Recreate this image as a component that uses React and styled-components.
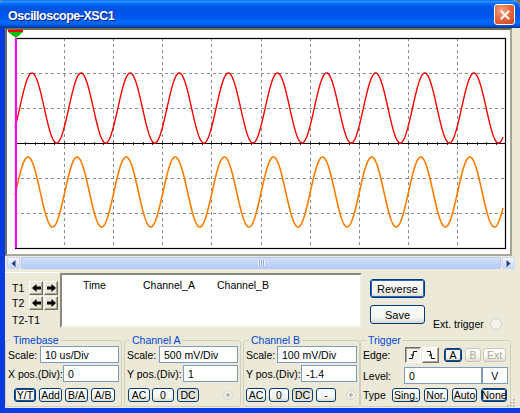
import React from "react";
import styled, { createGlobalStyle } from "styled-components";

const GlobalStyle = createGlobalStyle`
  html, body {
    margin: 0;
    padding: 0;
    background: #6d6d6d;
  }
  body {
    width: 520px;
    height: 413px;
    overflow: hidden;
    font-family: "Liberation Sans", Arial, sans-serif;
    font-size: 10px;
    color: #000;
  }
`;

const Window = styled.div`
  position: relative;
  width: 520px;
  height: 413px;
  display: flex;
  flex-direction: column;
  overflow: hidden;
  border-top-left-radius: 3px;
  border-top-right-radius: 8px;
  background: #ece9d8;
`;

const TitleBar = styled.div`
  flex: none;
  height: 25px;
  padding: 3px 5px 0 8px;
  display: flex;
  align-items: center;
  background: linear-gradient(
    to bottom,
    #0058ee 0%,
    #3593ff 4%,
    #288eff 7%,
    #127dff 10%,
    #036ffc 13%,
    #0262ee 18%,
    #0057e5 24%,
    #0054e3 30%,
    #0055eb 56%,
    #005bf5 66%,
    #026afe 76%,
    #0062ef 86%,
    #0052d6 92%,
    #0040ab 96%,
    #003092 100%
  );
`;

const Title = styled.span`
  color: #fff;
  font-weight: bold;
  font-size: 12.5px;
  letter-spacing: -0.5px;
  text-shadow: 1px 1px 0 #0a1e8c;
`;

const CloseButton = styled.div`
  margin-left: auto;
  margin-top: -2px;
  width: 19px;
  height: 19px;
  border: 1px solid #fff;
  border-radius: 3px;
  display: flex;
  align-items: center;
  justify-content: center;
  background: radial-gradient(circle at 35% 30%, #f4a98a 0%, #e56a3e 45%, #d2401a 100%);
`;

const Body = styled.div`
  flex: 1;
  display: flex;
  flex-direction: column;
  min-height: 0;
  border-left: 5px solid #0a3be0;
  border-bottom: 5px solid #0b3ee6;
`;

const Screen = styled.div`
  flex: none;
  width: 503px;
  height: 224px;
  background: #fff;
  border-style: solid;
  border-width: 2px;
  border-color: #6f6c55 #a7a695 #aca899 #716f64;
`;

const ScrollBar = styled.div`
  flex: none;
  height: 12px;
  margin: 1px 5px 0 2px;
  display: flex;
  gap: 1px;
`;

const ScrollButton = styled.div`
  width: 11px;
  height: 10px;
  border: 1px solid #c7d6fb;
  border-radius: 2px;
  display: flex;
  align-items: center;
  justify-content: center;
  background: linear-gradient(to bottom, #f3f7ff, #c6d6fb);
`;

const ScrollThumb = styled.div`
  flex: 1;
  height: 10px;
  border: 1px solid #b4c8f6;
  border-radius: 2px;
  display: flex;
  align-items: center;
  justify-content: center;
  background: linear-gradient(to bottom, #d3dffb, #c1d3f9 60%, #b5caf5);
`;

const Grip = styled.div`
  width: 7px;
  height: 6px;
  background: repeating-linear-gradient(
    to right,
    #eef3fe 0px,
    #eef3fe 1px,
    #8ca8e6 1px,
    #8ca8e6 2px
  );
`;

const CursorRow = styled.div`
  flex: none;
  height: 60px;
  margin-top: 3px;
  display: flex;
  align-items: flex-start;
`;

const TPanel = styled.div`
  width: 48px;
  height: 49px;
  padding: 7px 0 0 7px;
  border-top: 1px solid #fff;
  display: grid;
  grid-template-columns: 16px 14px 14px;
  grid-template-rows: 15px 15px 1fr;
  column-gap: 1px;
  align-items: center;
`;

const TLabel = styled.span`
  font-size: 10.5px;
  grid-column: ${(p) => p.$span || "auto"};
`;

const ArrowButton = styled.div`
  width: 12px;
  height: 12px;
  display: flex;
  align-items: center;
  justify-content: center;
  background: #ece9d8;
  border-style: solid;
  border-width: 1px;
  border-color: #fff #716f64 #716f64 #fff;
  box-shadow: inset -1px -1px 0 #aca899;
`;

const Table = styled.div`
  width: 277px;
  height: 47px;
  margin-top: 1px;
  padding: 4px 0 0 21px;
  background: #fff;
  border-style: solid;
  border-width: 2px;
  border-color: #8a887c #f1efe2 #f1efe2 #8a887c;
  display: grid;
  grid-template-columns: 60px 74px 1fr;
  align-content: start;
`;

const HeadCell = styled.span`
  font-size: 10.5px;
`;

const ButtonColumn = styled.div`
  margin-left: 8px;
  padding-top: 7px;
  display: flex;
  flex-direction: column;
  gap: 7px;
`;

const PushButton = styled.div`
  width: 53px;
  height: 17px;
  border: 1px solid #003c74;
  border-radius: 3px;
  display: flex;
  align-items: center;
  justify-content: center;
  font-size: 11px;
  background: linear-gradient(to bottom, #ffffff 0%, #f5f4ef 70%, #dcd8cc 100%);
  box-shadow: ${(p) => (p.$default ? "inset 0 0 0 1px #2f62c9" : "none")};
`;

const ExtTrigger = styled.div`
  margin-left: 8px;
  margin-top: 46px;
  display: flex;
  align-items: center;
  gap: 6px;
  font-size: 10.5px;
  white-space: nowrap;
`;

const BigRadio = styled.span`
  width: 10px;
  height: 10px;
  border-radius: 50%;
  border: 1px solid #cfcec6;
  background: #f3f2ec;
`;

const GroupRow = styled.div`
  flex: 1;
  display: flex;
  margin-top: 2px;
  margin-bottom: 1px;
  min-height: 0;
`;

const Group = styled.fieldset`
  margin: 0 ${(p) => p.$gap || 0}px 0 0;
  padding: 0 2px 2px 2px;
  width: ${(p) => p.$w}px;
  box-sizing: border-box;
  border: 1px solid #d0d0bf;
  border-radius: 3px;
  display: flex;
  flex-direction: column;
  min-width: 0;
`;

const Legend = styled.legend`
  margin-left: 3px;
  padding: 0 2px;
  color: #0046d5;
  font-size: 10.5px;
  line-height: 12px;
`;

const FieldRow = styled.div`
  height: 17px;
  margin-top: ${(p) => p.$top || 0}px;
  display: flex;
  align-items: center;
`;

const Label = styled.span`
  font-size: 10.5px;
  width: ${(p) => (p.$w ? `${p.$w}px` : "auto")};
  flex: none;
  white-space: nowrap;
`;

const Field = styled.div`
  margin-left: ${(p) => (p.$fixed ? "0" : "auto")};
  width: ${(p) => p.$w}px;
  height: 15px;
  border: 1px solid #7f9db9;
  background: #fff;
  display: flex;
  align-items: center;
  justify-content: ${(p) => (p.$center ? "center" : "flex-start")};
  padding-left: ${(p) => (p.$center ? 0 : 4)}px;
  font-size: 10.5px;
`;

const ButtonRow = styled.div`
  height: 14px;
  margin-top: ${(p) => p.$top || 6}px;
  padding-left: ${(p) => p.$indent || 0}px;
  display: flex;
  align-items: center;
  gap: ${(p) => p.$gap || 3}px;
`;

const SmallButton = styled.div`
  width: ${(p) => p.$w}px;
  height: 14px;
  box-sizing: border-box;
  margin-left: ${(p) => p.$ml || 0}px;
  border: 1px solid ${(p) => (p.$disabled ? "#c9c7ba" : "#003c74")};
  border-radius: 3px;
  display: flex;
  align-items: center;
  justify-content: center;
  font-size: 10.5px;
  color: ${(p) => (p.$disabled ? "#aca899" : "#000")};
  background: ${(p) =>
    p.$pressed
      ? "linear-gradient(to bottom, #dedcd2, #e7e5dc)"
      : "linear-gradient(to bottom, #ffffff 0%, #f5f4ef 70%, #dcd8cc 100%)"};
  box-shadow: ${(p) => (p.$bold ? "inset 0 0 0 1px #1b4a8e" : "none")};
`;

const EdgeButton = styled.div`
  width: ${(p) => p.$w}px;
  height: 14px;
  margin-left: ${(p) => p.$ml || 0}px;
  display: flex;
  align-items: center;
  justify-content: center;
  border-style: solid;
  border-width: 1px;
  border-color: ${(p) =>
    p.$down ? "#716f64 #fff #fff #716f64" : "#fff #716f64 #716f64 #fff"};
  background: ${(p) => (p.$down ? "#f4f3ee" : "#fbfbf8")};
  box-shadow: ${(p) =>
    p.$down ? "inset 1px 1px 0 #aca899" : "inset -1px -1px 0 #aca899"};
`;

const SmallRadio = styled.span`
  width: 8px;
  height: 8px;
  margin-left: auto;
  margin-right: ${(p) => p.$mr || 0}px;
  border-radius: 50%;
  border: 1px solid #d4d3ca;
  background: radial-gradient(circle, #b9b8ae 0 1.5px, #f1f0ea 2px);
`;

const ResizeGrip = styled.svg`
  position: absolute;
  right: 5px;
  bottom: 6px;
`;

/* ---------- drawing of the scope screen ---------- */

const GX0 = 8;
const GX1 = 499;
const GY0 = 8;
const GY1 = 218;
const DX = (GX1 - GX0) / 10;
const DY = (GY1 - GY0) / 6;

function wave(center, zeroX) {
  const pts = [];
  for (let x = GX0; x <= 496; x += 0.5) {
    const y = center - 35 * Math.sin((2 * Math.PI * (x - zeroX)) / DX);
    pts.push(`${x.toFixed(1)},${y.toFixed(2)}`);
  }
  return pts.join(" ");
}

const redWave = wave(78, 12.7);
const orangeWave = wave(162, 8.7);

function ScopeScreen() {
  const vLines = [];
  for (let k = 1; k < 10; k++) vLines.push(Math.round(GX0 + DX * k) + 0.5);
  const hLines = [1, 2, 4, 5].map((k) => Math.round(GY0 + DY * k) + 0.5);
  const axisY = Math.round(GY0 + DY * 3) + 0.5;
  const ticks = [];
  for (let k = 1; k < 50; k++) ticks.push(Math.round(GX0 + (DX / 5) * k) + 0.5);

  return (
    <svg width="503" height="224" viewBox="0 0 503 224">
      {vLines.map((x) => (
        <line key={"v" + x} x1={x} y1={GY0} x2={x} y2={GY1} stroke="#8c8c8c" strokeDasharray="3 3" />
      ))}
      {hLines.map((y) => (
        <line key={"h" + y} x1={GX0} y1={y} x2={GX1} y2={y} stroke="#8c8c8c" strokeDasharray="3 3" />
      ))}
      <line x1={GX0} y1={axisY} x2={GX1} y2={axisY} stroke="#000" />
      {ticks.map((x) => (
        <line key={"t" + x} x1={x} y1={axisY - 1.5} x2={x} y2={axisY + 1.5} stroke="#000" strokeWidth="0.8" />
      ))}
      <rect x={GX0 + 0.5} y={GY0 + 0.5} width={GX1 - GX0 - 1} height={GY1 - GY0} fill="none" stroke="#000" strokeWidth="1.2" />
      <polyline points={redWave} fill="none" stroke="#ff0000" strokeWidth="1.4" />
      <polyline points={orangeWave} fill="none" stroke="#ff7c00" strokeWidth="1.6" />
      <rect x="8" y={GY0} width="2" height={GY1 - GY0} fill="#ff00ff" />
      <rect x="1" y="0" width="15" height="2" fill="#ff0000" />
      <polygon points="1,2 16,2 9,8" fill="#00c000" />
    </svg>
  );
}

const LeftArrow = () => (
  <svg width="9" height="8" viewBox="0 0 9 8">
    <polygon points="0,4 4.5,0 4.5,2.5 9,2.5 9,5.5 4.5,5.5 4.5,8" fill="#000" />
  </svg>
);

const RightArrow = () => (
  <svg width="9" height="8" viewBox="0 0 9 8">
    <polygon points="9,4 4.5,0 4.5,2.5 0,2.5 0,5.5 4.5,5.5 4.5,8" fill="#000" />
  </svg>
);

const ScrollChevron = ({ dir }) => (
  <svg width="5" height="7" viewBox="0 0 5 7">
    {dir === "left" ? (
      <polygon points="4.5,0 4.5,7 0.5,3.5" fill="#2c3e7a" />
    ) : (
      <polygon points="0.5,0 0.5,7 4.5,3.5" fill="#2c3e7a" />
    )}
  </svg>
);

const EdgeIcon = ({ falling }) => (
  <svg width="10" height="10" viewBox="0 0 10 10">
    <path
      d={falling ? "M1 1.5 H4.5 L5.5 8.5 H9" : "M1 8.5 H4.5 L5.5 1.5 H9"}
      fill="none"
      stroke="#000"
      strokeWidth="1"
    />
    <path d="M3 5 H6" stroke="#000" strokeWidth="1" />
  </svg>
);

export default function App() {
  return (
    <>
      <GlobalStyle />
      <Window>
        <TitleBar>
          <Title>Oscilloscope-XSC1</Title>
          <CloseButton>
            <svg width="10" height="10" viewBox="0 0 10 10">
              <path d="M1.5 1.5 L8.5 8.5 M8.5 1.5 L1.5 8.5" stroke="#fff" strokeWidth="2" strokeLinecap="square" />
            </svg>
          </CloseButton>
        </TitleBar>

        <Body>
          <Screen>
            <ScopeScreen />
          </Screen>

          <ScrollBar>
            <ScrollButton>
              <ScrollChevron dir="left" />
            </ScrollButton>
            <ScrollThumb>
              <Grip />
            </ScrollThumb>
            <ScrollButton>
              <ScrollChevron dir="right" />
            </ScrollButton>
          </ScrollBar>

          <CursorRow>
            <TPanel>
              <TLabel>T1</TLabel>
              <ArrowButton>
                <LeftArrow />
              </ArrowButton>
              <ArrowButton>
                <RightArrow />
              </ArrowButton>
              <TLabel>T2</TLabel>
              <ArrowButton>
                <LeftArrow />
              </ArrowButton>
              <ArrowButton>
                <RightArrow />
              </ArrowButton>
              <TLabel $span="1 / 4">T2-T1</TLabel>
            </TPanel>

            <Table>
              <HeadCell>Time</HeadCell>
              <HeadCell>Channel_A</HeadCell>
              <HeadCell>Channel_B</HeadCell>
            </Table>

            <ButtonColumn>
              <PushButton $default>Reverse</PushButton>
              <PushButton>Save</PushButton>
            </ButtonColumn>

            <ExtTrigger>
              Ext. trigger
              <BigRadio />
            </ExtTrigger>
          </CursorRow>

          <GroupRow>
            <Group $w={117} $gap={2}>
              <Legend>Timebase</Legend>
              <FieldRow>
                <Label>Scale:</Label>
                <Field $w={73}>10 us/Div</Field>
              </FieldRow>
              <FieldRow $top={2}>
                <Label>X pos.(Div):</Label>
                <Field $w={50}>0</Field>
              </FieldRow>
              <ButtonRow $indent={6}>
                <SmallButton $w={22} $bold>Y/T</SmallButton>
                <SmallButton $w={23}>Add</SmallButton>
                <SmallButton $w={23}>B/A</SmallButton>
                <SmallButton $w={24}>A/B</SmallButton>
              </ButtonRow>
            </Group>

            <Group $w={117} $gap={2}>
              <Legend>Channel A</Legend>
              <FieldRow>
                <Label>Scale:</Label>
                <Field $w={73}>500 mV/Div</Field>
              </FieldRow>
              <FieldRow $top={2}>
                <Label>Y pos.(Div):</Label>
                <Field $w={49}>1</Field>
              </FieldRow>
              <ButtonRow $indent={1} $gap={2}>
                <SmallButton $w={22}>AC</SmallButton>
                <SmallButton $w={22}>0</SmallButton>
                <SmallButton $w={22} $ml={1} $pressed>DC</SmallButton>
                <SmallRadio $mr={5} />
              </ButtonRow>
            </Group>

            <Group $w={117} $gap={0}>
              <Legend>Channel B</Legend>
              <FieldRow>
                <Label>Scale:</Label>
                <Field $w={74}>100 mV/Div</Field>
              </FieldRow>
              <FieldRow $top={2}>
                <Label>Y pos.(Div):</Label>
                <Field $w={50}>-1.4</Field>
              </FieldRow>
              <ButtonRow $gap={3}>
                <SmallButton $w={20}>AC</SmallButton>
                <SmallButton $w={20}>0</SmallButton>
                <SmallButton $w={21} $pressed>DC</SmallButton>
                <SmallButton $w={20}>-</SmallButton>
                <SmallRadio $mr={1} />
              </ButtonRow>
            </Group>

            <Group $w={151}>
              <Legend>Trigger</Legend>
              <FieldRow>
                <Label $w={42}>Edge:</Label>
                <EdgeButton $w={14} $down>
                  <EdgeIcon />
                </EdgeButton>
                <EdgeButton $w={15} $ml={1}>
                  <EdgeIcon falling />
                </EdgeButton>
                <SmallButton $w={18} $ml={5} $bold>A</SmallButton>
                <SmallButton $w={16} $ml={3} $disabled>B</SmallButton>
                <SmallButton $w={23} $ml={2} $disabled>Ext</SmallButton>
              </FieldRow>
              <FieldRow $top={4}>
                <Label $w={41}>Level:</Label>
                <Field $w={73} $fixed>0</Field>
                <Field $w={25} $fixed $center>V</Field>
              </FieldRow>
              <ButtonRow $gap={4} $top={4}>
                <Label $w={25}>Type</Label>
                <SmallButton $w={28}>Sing.</SmallButton>
                <SmallButton $w={24}>Nor.</SmallButton>
                <SmallButton $w={25}>Auto</SmallButton>
                <SmallButton $w={26} $bold>None</SmallButton>
              </ButtonRow>
            </Group>
          </GroupRow>
        </Body>

        <ResizeGrip width="9" height="9" viewBox="0 0 9 9">
          {[
            [7, 1],
            [4, 4],
            [7, 4],
            [1, 7],
            [4, 7],
            [7, 7],
          ].map(([x, y]) => (
            <rect key={`${x}-${y}`} x={x} y={y} width="1.5" height="1.5" fill="#a8a597" />
          ))}
        </ResizeGrip>
      </Window>
    </>
  );
}
